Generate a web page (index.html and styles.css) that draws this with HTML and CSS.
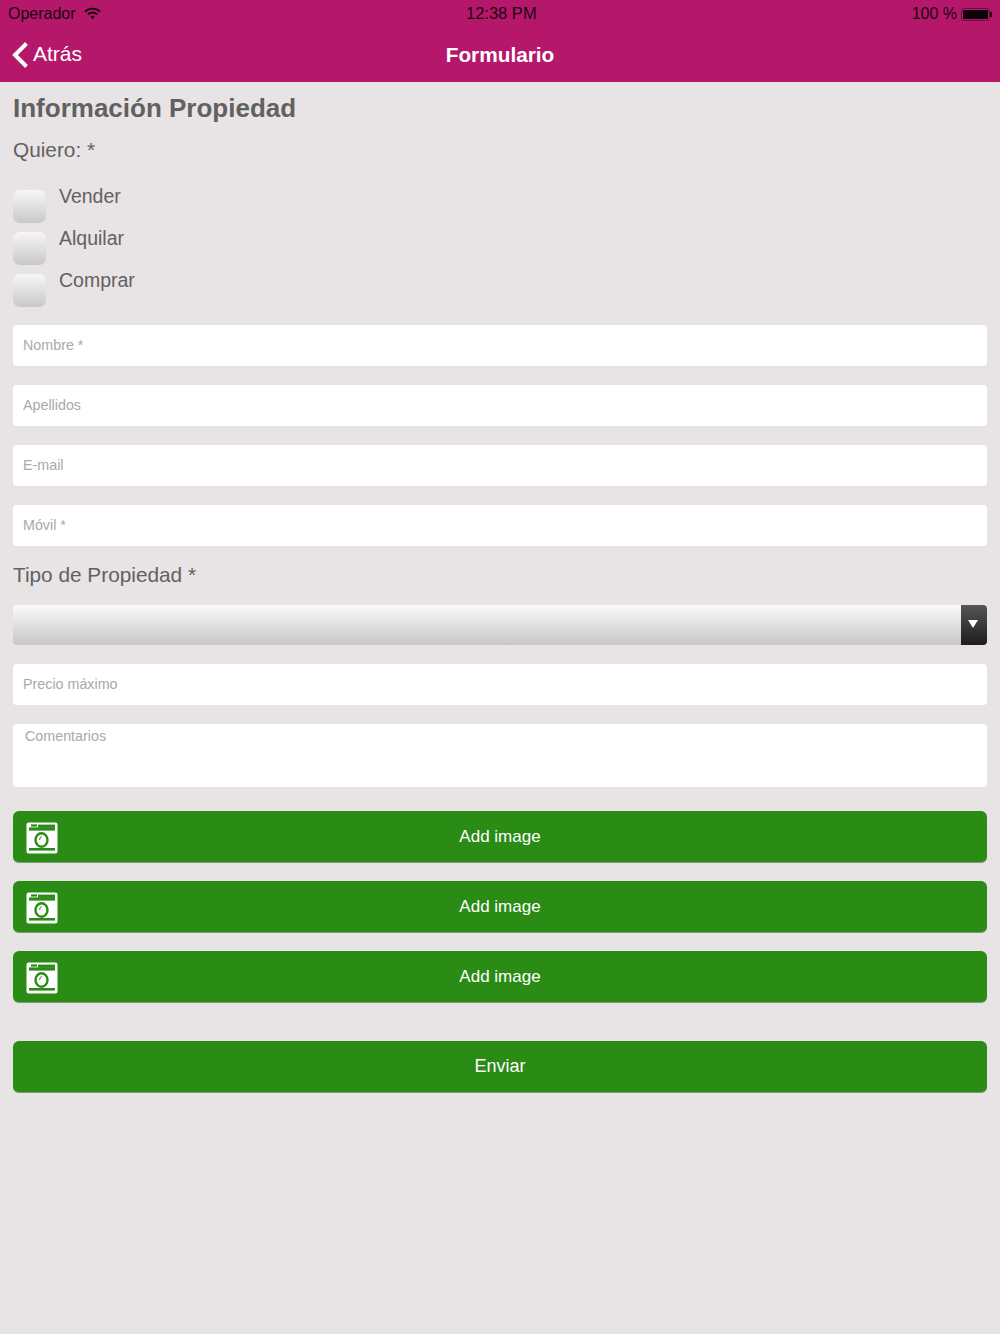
FILE: index.html
```html
<!DOCTYPE html>
<html lang="es">
<head>
    <meta charset="UTF-8">
    <meta name="viewport" content="width=device-width, initial-scale=1.0">
    <title>Formulario</title>
    <link rel="stylesheet" href="styles.css">
</head>
<body>
    <div class="status-bar">
        <div class="status-left">
            <span>Operador</span>
            <svg class="wifi" width="17" height="13" viewBox="0 0 18 13">
                <path d="M1 4.6 A11.5 11.5 0 0 1 17 4.6" fill="none" stroke="#1a0510" stroke-width="2"/>
                <path d="M4 7.4 A7.2 7.2 0 0 1 14 7.4" fill="none" stroke="#1a0510" stroke-width="2"/>
                <path d="M6.6 10 L9 12.6 L11.4 10 A3.4 3.4 0 0 0 6.6 10 Z" fill="#1a0510"/>
            </svg>
        </div>
        <div class="status-time">12:38 PM</div>
        <div class="status-right">
            <span>100 %</span>
            <div class="battery"><div class="battery-level"></div></div>
            <div class="battery-tip"></div>
        </div>
    </div>

    <div class="nav-bar">
        <a class="back" href="#">
            <svg width="16" height="26" viewBox="0 0 16 26">
                <path d="M14.5 1.5 L3 13 L14.5 24.5" fill="none" stroke="#fff" stroke-width="4"/>
            </svg>
            <span class="back-text">Atrás</span>
        </a>
        <div class="nav-title">Formulario</div>
    </div>

    <form class="content">
        <h1>Información Propiedad</h1>
        <p class="label">Quiero: *</p>

        <div class="choices">
            <label class="choice"><span class="check"></span><span>Vender</span></label>
            <label class="choice"><span class="check"></span><span>Alquilar</span></label>
            <label class="choice"><span class="check"></span><span>Comprar</span></label>
        </div>

        <input class="field" type="text" placeholder="Nombre *">
        <input class="field" type="text" placeholder="Apellidos">
        <input class="field" type="text" placeholder="E-mail">
        <input class="field" type="text" placeholder="Móvil *">

        <p class="label label-type">Tipo de Propiedad *</p>
        <div class="select">
            <div class="select-arrow"></div>
        </div>

        <input class="field" type="text" placeholder="Precio máximo">
        <textarea class="field comments" placeholder="Comentarios"></textarea>

        <div class="images">
            <button type="button" class="btn">
                <svg class="camera" width="32" height="32" viewBox="0 0 32 32">
                    <use href="#camera-icon"/>
                </svg>
                Add image
            </button>
            <button type="button" class="btn">
                <svg class="camera" width="32" height="32" viewBox="0 0 32 32">
                    <use href="#camera-icon"/>
                </svg>
                Add image
            </button>
            <button type="button" class="btn">
                <svg class="camera" width="32" height="32" viewBox="0 0 32 32">
                    <use href="#camera-icon"/>
                </svg>
                Add image
            </button>
        </div>

        <button type="submit" class="btn btn-send">Enviar</button>
    </form>

    <svg class="defs" width="0" height="0">
        <symbol id="camera-icon" viewBox="0 0 32 32">
            <rect x="0.5" y="0.5" width="31" height="31" rx="2" fill="#fff"/>
            <rect x="3" y="5.4" width="26" height="3.2" fill="#2a8b15"/>
            <rect x="12" y="2.6" width="17" height="3.2" fill="#2a8b15"/>
            <rect x="5" y="2.4" width="6" height="2.2" fill="#2a8b15"/>
            <rect x="3" y="26" width="26" height="2.6" fill="#2a8b15"/>
            <ellipse cx="15.5" cy="18" rx="6" ry="6.8" fill="none" stroke="#2a8b15" stroke-width="2.4"/>
            <path d="M13.6 18 Q13.6 15 16 14.4" fill="none" stroke="#2a8b15" stroke-width="1"/>
        </symbol>
    </svg>
</body>
</html>
```

FILE: styles.css
```css
:root {
    --header-color: #b5186b;
    --bg-color: #e8e4e5;
    --text-color: #616161;
    --placeholder: #a9a9a9;
    --green: #2a8b15;
}

* {
    margin: 0;
    padding: 0;
    box-sizing: border-box;
    font-family: "Liberation Sans", Arial, sans-serif;
}

body {
    min-height: 1334px;
    background-color: var(--bg-color);
    color: var(--text-color);
}

.status-bar {
    display: flex;
    justify-content: space-between;
    align-items: center;
    height: 28px;
    padding: 0 8px;
    background-color: var(--header-color);
    color: #1a0510;
    font-size: 16px;
    position: relative;
}

.status-left,
.status-right {
    display: flex;
    align-items: center;
}

.wifi {
    margin-left: 8px;
    margin-top: -2px;
}

.status-time {
    position: absolute;
    left: 466px;
    top: 4px;
    font-size: 16.5px;
}

.battery {
    width: 29px;
    height: 13px;
    margin-left: 4px;
    padding: 1px;
    border: 1px solid #6b0f40;
    border-radius: 3px;
}

.battery-level {
    height: 100%;
    background-color: #0c0208;
    border-radius: 1px;
}

.battery-tip {
    width: 2px;
    height: 5px;
    background-color: #1a0510;
}

.nav-bar {
    position: relative;
    display: flex;
    align-items: center;
    justify-content: center;
    height: 54px;
    background-color: var(--header-color);
    color: #fff;
}

.back {
    position: absolute;
    left: 12px;
    top: 0;
    display: flex;
    align-items: center;
    gap: 5px;
    height: 54px;
    color: #fff;
    text-decoration: none;
    font-size: 21px;
}

.back-text {
    padding-bottom: 2px;
}

.nav-title {
    font-size: 20.8px;
    font-weight: 700;
}

.content {
    display: flex;
    flex-direction: column;
    padding: 0 13px;
}

h1 {
    margin-top: 11px;
    font-size: 26px;
    line-height: 30px;
    font-weight: 700;
}

.label {
    margin-top: 14px;
    font-size: 20.8px;
    line-height: 26px;
}

.label-type {
    margin-top: -3px;
    margin-bottom: 17px;
}

.choices {
    display: flex;
    flex-direction: column;
    gap: 9px;
    margin-top: 27px;
    margin-bottom: 18px;
}

.choice {
    display: flex;
    gap: 13px;
    height: 33px;
    font-size: 19.5px;
}

.choice span:last-child {
    line-height: 13px;
    height: 13px;
}

.check {
    width: 33px;
    height: 33px;
    border-radius: 7px;
    background: linear-gradient(to bottom, #f8f7f7, #c8c8c8);
}

.field {
    display: block;
    width: 100%;
    height: 41px;
    margin-bottom: 19px;
    padding: 0 10px 2px;
    border: none;
    border-radius: 4px;
    background-color: #fff;
    font-size: 14.3px;
    outline: none;
}

.field::placeholder {
    color: var(--placeholder);
    opacity: 1;
}

.comments {
    height: 63px;
    margin-bottom: 24px;
    padding: 4px 12px;
    resize: none;
    line-height: 17px;
}

.select {
    display: flex;
    justify-content: flex-end;
    height: 40px;
    margin-bottom: 19px;
    border-radius: 4px;
    background: linear-gradient(to bottom, #fbfafa, #c6c6c6);
}

.select-arrow {
    position: relative;
    width: 26px;
    border-radius: 0 4px 4px 0;
    background: linear-gradient(to bottom, #555, #1d1d1d);
}

.select-arrow::after {
    content: "";
    position: absolute;
    left: 7px;
    top: 15px;
    border-left: 5px solid transparent;
    border-right: 5px solid transparent;
    border-top: 8px solid #fff;
}

.images {
    display: flex;
    flex-direction: column;
    gap: 18px;
}

.btn {
    position: relative;
    display: block;
    width: 100%;
    height: 52px;
    border: none;
    border-bottom: 1px solid #7d9a76;
    border-radius: 6px;
    background-color: var(--green);
    color: #fff;
    font-size: 17px;
    text-align: center;
}

.camera {
    position: absolute;
    left: 13px;
    top: 11px;
}

.btn-send {
    margin-top: 38px;
    font-size: 18px;
}

.defs {
    position: absolute;
}
```
